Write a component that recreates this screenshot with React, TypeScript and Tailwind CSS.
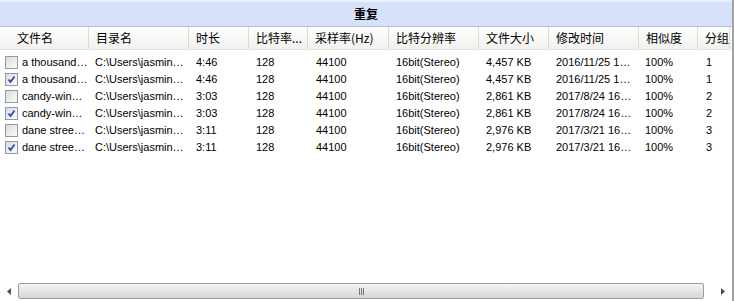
import React from 'react';

type Row = {
  checked: boolean;
  name: string;
  dir: string;
  duration: string;
  bitrate: string;
  sample: string;
  depth: string;
  size: string;
  modified: string;
  similarity: string;
  group: string;
};

const columns = ['文件名', '目录名', '时长', '比特率...', '采样率(Hz)', '比特分辨率', '文件大小', '修改时间', '相似度', '分组'];

const rows: Row[] = [
  { checked: false, name: 'a thousand…', dir: 'C:\\Users\\jasmin…', duration: '4:46', bitrate: '128', sample: '44100', depth: '16bit(Stereo)', size: '4,457 KB', modified: '2016/11/25 1…', similarity: '100%', group: '1' },
  { checked: true, name: 'a thousand…', dir: 'C:\\Users\\jasmin…', duration: '4:46', bitrate: '128', sample: '44100', depth: '16bit(Stereo)', size: '4,457 KB', modified: '2016/11/25 1…', similarity: '100%', group: '1' },
  { checked: false, name: 'candy-win…', dir: 'C:\\Users\\jasmin…', duration: '3:03', bitrate: '128', sample: '44100', depth: '16bit(Stereo)', size: '2,861 KB', modified: '2017/8/24 16…', similarity: '100%', group: '2' },
  { checked: true, name: 'candy-win…', dir: 'C:\\Users\\jasmin…', duration: '3:03', bitrate: '128', sample: '44100', depth: '16bit(Stereo)', size: '2,861 KB', modified: '2017/8/24 16…', similarity: '100%', group: '2' },
  { checked: false, name: 'dane stree…', dir: 'C:\\Users\\jasmin…', duration: '3:11', bitrate: '128', sample: '44100', depth: '16bit(Stereo)', size: '2,976 KB', modified: '2017/3/21 16…', similarity: '100%', group: '3' },
  { checked: true, name: 'dane stree…', dir: 'C:\\Users\\jasmin…', duration: '3:11', bitrate: '128', sample: '44100', depth: '16bit(Stereo)', size: '2,976 KB', modified: '2017/3/21 16…', similarity: '100%', group: '3' },
];

const grid = 'grid grid-cols-[89px_100px_60px_59px_81px_90px_70px_90px_59px_32px]';

function Checkbox({ checked }: { checked: boolean }) {
  return (
    <div className="w-[13px] h-[13px] border border-[#8f9aa8] bg-gradient-to-br from-[#dcdcd6] to-[#fbfbfa] flex items-center justify-center shrink-0">
      {checked && (
        <svg width="9" height="9" viewBox="0 0 9 9">
          <path d="M1.5 4.5 L3.5 7 L7.5 1.5" stroke="#2a47c5" strokeWidth="1.8" fill="none" />
        </svg>
      )}
    </div>
  );
}

export default function App() {
  return (
    <div className="w-[734px] h-[301px] bg-white flex flex-col border-r-2 border-[#a3a3a3] overflow-hidden font-['Liberation_Sans','Noto_Sans_CJK_SC',sans-serif] text-[11px] text-black">
      {/* title */}
      <div className="h-[27px] shrink-0 bg-[#d6e2fb] border-t-2 border-[#eaf0fd] border-b border-b-[#b2c1de] flex items-center justify-center">
        <span className="font-bold text-[12px] font-['Noto_Sans_CJK_SC',sans-serif]">重复</span>
      </div>

      {/* header */}
      <div className={`${grid} h-[23px] shrink-0 bg-gradient-to-b from-white to-[#f1f1ee] border-b border-[#e4e4e0]`}>
        {columns.map((c, i) => (
          <div
            key={c}
            className={`flex items-center border-r border-[#dcdcd6] font-['Noto_Sans_CJK_SC',sans-serif] text-[12px] ${i === 0 ? 'pl-[17px]' : 'pl-[7px]'} whitespace-nowrap overflow-hidden`}
          >
            {c}
          </div>
        ))}
      </div>

      {/* rows */}
      <div className="flex-1 pt-[4px]">
        {rows.map((r, idx) => (
          <div key={idx} className={`${grid} h-[17px] items-center whitespace-nowrap`}>
            <div className="flex items-center gap-[4px] pl-[5px]">
              <Checkbox checked={r.checked} />
              <span>{r.name}</span>
            </div>
            <div className="pl-[6px]">{r.dir}</div>
            <div className="pl-[7px]">{r.duration}</div>
            <div className="pl-[7px]">{r.bitrate}</div>
            <div className="pl-[8px]">{r.sample}</div>
            <div className="pl-[7px]">{r.depth}</div>
            <div className="pl-[7px]">{r.size}</div>
            <div className="pl-[7px]">{r.modified}</div>
            <div className="pl-[6px]">{r.similarity}</div>
            <div className="pl-[8px]">{r.group}</div>
          </div>
        ))}
      </div>

      {/* horizontal scrollbar */}
      <div className="h-[16px] shrink-0 mb-[2px] flex items-stretch">
        <div className="w-[18px] flex items-center justify-center">
          <svg width="4" height="7" viewBox="0 0 4 7">
            <path d="M4 0 L0 3.5 L4 7 Z" fill="#4d4d4d" />
          </svg>
        </div>
        <div className="flex-1 border border-[#9c9c9c] rounded-[2px] bg-gradient-to-b from-[#f4f4f4] to-[#d6d6d6] flex items-center justify-center">
          <div className="flex gap-[1px]">
            <div className="w-[1px] h-[7px] bg-[#777]" />
            <div className="w-[1px] h-[7px] bg-[#777]" />
            <div className="w-[1px] h-[7px] bg-[#777]" />
          </div>
        </div>
        <div className="w-[28px] flex items-center justify-end pr-[7px]">
          <svg width="4" height="7" viewBox="0 0 4 7">
            <path d="M0 0 L4 3.5 L0 7 Z" fill="#4d4d4d" />
          </svg>
        </div>
      </div>
    </div>
  );
}
